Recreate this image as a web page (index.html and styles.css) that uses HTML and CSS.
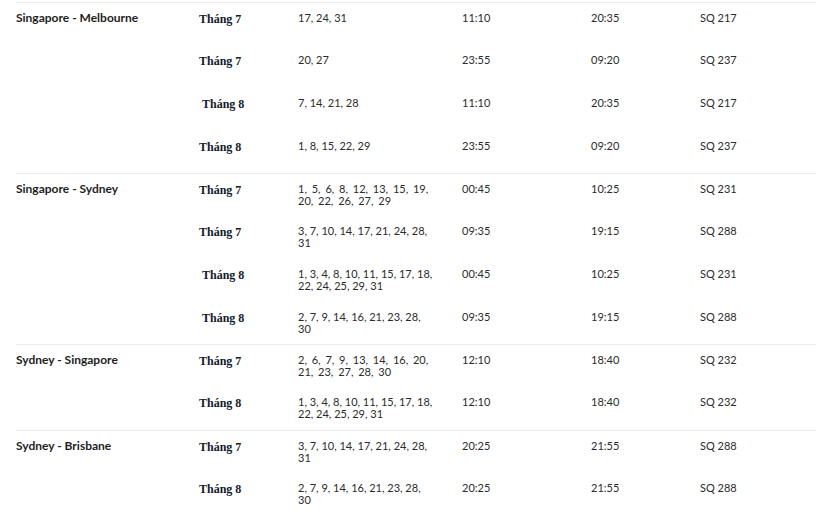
FILE: index.html
```html
<!DOCTYPE html>
<html lang="vi">
<head>
<meta charset="utf-8">
<title>Lịch bay</title>
<link rel="stylesheet" href="styles.css">
</head>
<body>
<table class="schedule">
  <colgroup>
    <col class="c-route"><col class="c-month"><col class="c-days"><col class="c-dep"><col class="c-arr"><col class="c-flight">
  </colgroup>
  <tbody>
    <tr class="sec">
      <td class="route" rowspan="4">Singapore - Melbourne</td>
      <td class="month">Tháng 7</td><td class="days">17, 24, 31</td><td>11:10</td><td>20:35</td><td>SQ 217</td>
    </tr>
    <tr>
      <td class="month">Tháng 7</td><td class="days">20, 27</td><td>23:55</td><td>09:20</td><td>SQ 237</td>
    </tr>
    <tr>
      <td class="month shift">Tháng 8</td><td class="days">7, 14, 21, 28</td><td>11:10</td><td>20:35</td><td>SQ 217</td>
    </tr>
    <tr>
      <td class="month">Tháng 8</td><td class="days">1, 8, 15, 22, 29</td><td>23:55</td><td>09:20</td><td>SQ 237</td>
    </tr>

    <tr class="sec">
      <td class="route" rowspan="4">Singapore - Sydney</td>
      <td class="month">Tháng 7</td><td class="days wide">1, 5, 6, 8, 12, 13, 15, 19, 20, 22, 26, 27, 29</td><td>00:45</td><td>10:25</td><td>SQ 231</td>
    </tr>
    <tr>
      <td class="month">Tháng 7</td><td class="days">3, 7, 10, 14, 17, 21, 24, 28, 31</td><td>09:35</td><td>19:15</td><td>SQ 288</td>
    </tr>
    <tr>
      <td class="month shift">Tháng 8</td><td class="days">1, 3, 4, 8, 10, 11, 15, 17, 18, 22, 24, 25, 29, 31</td><td>00:45</td><td>10:25</td><td>SQ 231</td>
    </tr>
    <tr>
      <td class="month shift">Tháng 8</td><td class="days">2, 7, 9, 14, 16, 21, 23, 28, 30</td><td>09:35</td><td>19:15</td><td>SQ 288</td>
    </tr>

    <tr class="sec">
      <td class="route" rowspan="2">Sydney - Singapore</td>
      <td class="month">Tháng 7</td><td class="days wide">2, 6, 7, 9, 13, 14, 16, 20, 21, 23, 27, 28, 30</td><td>12:10</td><td>18:40</td><td>SQ 232</td>
    </tr>
    <tr>
      <td class="month">Tháng 8</td><td class="days">1, 3, 4, 8, 10, 11, 15, 17, 18, 22, 24, 25, 29, 31</td><td>12:10</td><td>18:40</td><td>SQ 232</td>
    </tr>

    <tr class="sec">
      <td class="route" rowspan="2">Sydney - Brisbane</td>
      <td class="month">Tháng 7</td><td class="days">3, 7, 10, 14, 17, 21, 24, 28, 31</td><td>20:25</td><td>21:55</td><td>SQ 288</td>
    </tr>
    <tr>
      <td class="month">Tháng 8</td><td class="days">2, 7, 9, 14, 16, 21, 23, 28, 30</td><td>20:25</td><td>21:55</td><td>SQ 288</td>
    </tr>
  </tbody>
</table>
</body>
</html>
```
FILE: styles.css
```css
html, body {
  margin: 0;
  padding: 0;
  background: #ffffff;
}

body {
  padding: 2px 0 0 16px;
  font-family: Lato, "Liberation Sans", sans-serif;
  font-size: 11px;
  line-height: 12px;
  color: #2b2b2b;
}

.schedule {
  width: 800px;
  border-collapse: collapse;
  table-layout: fixed;
}

.c-route { width: 183px; }
.c-month { width: 99px; }
.c-days { width: 164px; }
.c-dep { width: 129px; }
.c-arr { width: 109px; }
.c-flight { width: 116px; }

.schedule td {
  height: 42.75px;
  padding: 9px 0 0 0;
  vertical-align: top;
  box-sizing: border-box;
}

.schedule tr.sec > td {
  border-top: 1px solid #ececec;
}

.schedule td.route {
  font-size: 12px;
  font-weight: 700;
  color: #1e1e1e;
}

.schedule td.month {
  padding-top: 10px;
  font-family: "Liberation Serif", "Times New Roman", serif;
  font-size: 12px;
  font-weight: 700;
  color: #141a2c;
}

.schedule td.month.shift {
  padding-left: 3px;
}

.schedule td.days {
  padding-right: 28px;
}

.schedule td.days.wide {
  word-spacing: 2px;
}
```
